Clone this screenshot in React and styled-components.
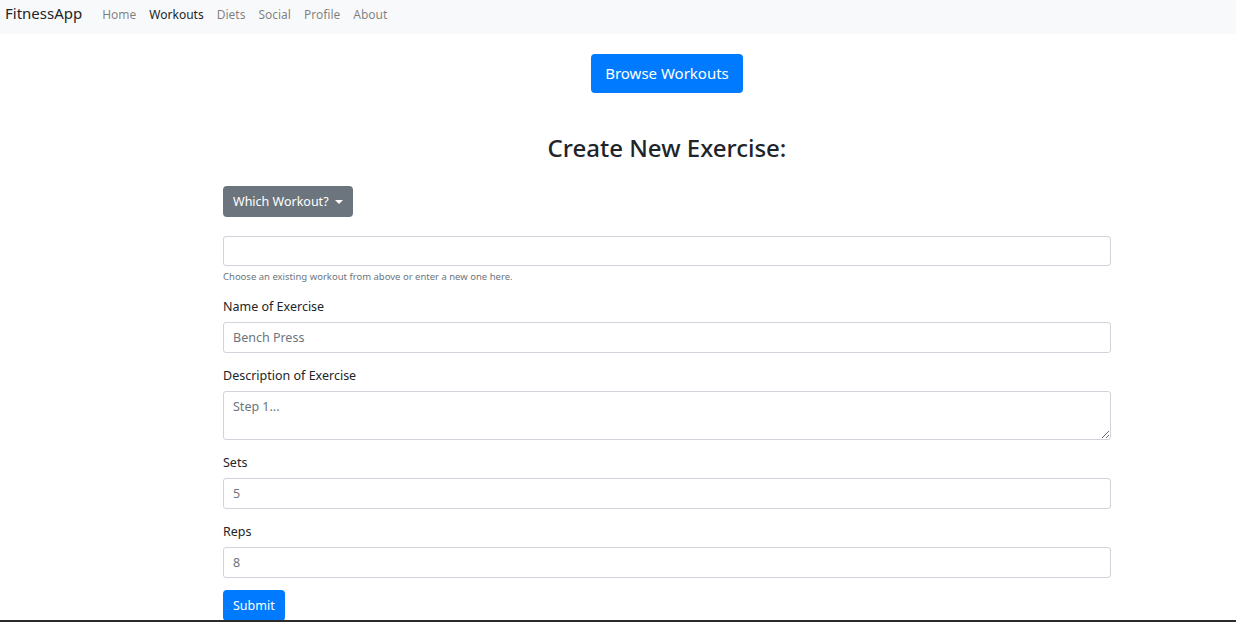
import React from "react";
import styled, { createGlobalStyle } from "styled-components";

const GlobalStyle = createGlobalStyle`
  body {
    margin: 0;
    font-family: "Noto Sans", "Open Sans", sans-serif;
    color: #212529;
    background: #fff;
  }
  * { box-sizing: border-box; }
`;

const NavBar = styled.nav`
  display: flex;
  align-items: baseline;
  height: 34px;
  padding: 2px 5px 0;
  background: #f8f9fa;
`;

const Brand = styled.a`
  font-size: 15px;
  line-height: 22px;
  color: #212529;
  margin-right: 20px;
`;

const NavLinks = styled.div`
  display: flex;
  gap: 13px;
`;

const NavLink = styled.a`
  font-size: 12px;
  color: ${(p) => (p.active ? "#212529" : "rgba(0, 0, 0, 0.5)")};
`;

const Main = styled.main`
  width: 888px;
  margin-left: 223px;
  display: flex;
  flex-direction: column;
`;

const TopRow = styled.div`
  display: flex;
  justify-content: center;
  padding-top: 20px;
`;

const Button = styled.button`
  font-family: inherit;
  border: none;
  color: #fff;
  border-radius: 4px;
  background: ${(p) => (p.variant === "secondary" ? "#6c757d" : "#007bff")};
  font-size: ${(p) => (p.size === "lg" ? "15px" : "12.5px")};
  padding: ${(p) => (p.size === "lg" ? "0 14px 2px" : "0 10px")};
  height: ${(p) => (p.size === "lg" ? "39px" : "31px")};
  display: inline-flex;
  align-items: center;
  align-self: flex-start;
`;

const Caret = styled.span`
  display: inline-block;
  margin-left: 6px;
  border-top: 4px solid #fff;
  border-left: 4px solid transparent;
  border-right: 4px solid transparent;
`;

const Heading = styled.h2`
  text-align: center;
  font-size: 24px;
  font-weight: 500;
  margin: 38px 0 22px;
`;

const Field = styled.div`
  display: flex;
  flex-direction: column;
  margin-top: ${(p) => p.top || 0}px;
`;

const Label = styled.label`
  font-size: 12.5px;
  line-height: 16px;
  margin-bottom: 7px;
`;

const Input = styled.input`
  font-family: inherit;
  font-size: 12.5px;
  height: ${(p) => p.h || 31}px;
  padding: 0 9px;
  border: 1px solid #ced4da;
  border-radius: 3px;
  color: #495057;
  &::placeholder { color: #6c757d; }
`;

const TextArea = styled.textarea`
  font-family: inherit;
  font-size: 12.5px;
  height: 49px;
  padding: 6px 9px;
  border: 1px solid #ced4da;
  border-radius: 3px;
  &::placeholder { color: #6c757d; }
`;

const Help = styled.small`
  font-size: 9.5px;
  line-height: 13px;
  color: #6c757d;
  margin-top: 4px;
`;

const BottomLine = styled.div`
  position: fixed;
  left: 0;
  right: 0;
  bottom: 0;
  height: 2px;
  background: #2b2b2b;
`;

export default function App() {
  return (
    <>
      <GlobalStyle />
      <NavBar>
        <Brand>FitnessApp</Brand>
        <NavLinks>
          <NavLink>Home</NavLink>
          <NavLink active>Workouts</NavLink>
          <NavLink>Diets</NavLink>
          <NavLink>Social</NavLink>
          <NavLink>Profile</NavLink>
          <NavLink>About</NavLink>
        </NavLinks>
      </NavBar>
      <Main>
        <TopRow>
          <Button size="lg">Browse Workouts</Button>
        </TopRow>
        <Heading>Create New Exercise:</Heading>
        <Button variant="secondary" size="sm">
          Which Workout? <Caret />
        </Button>
        <Field top={19}>
          <Input h={30} />
          <Help>Choose an existing workout from above or enter a new one here.</Help>
        </Field>
        <Field top={16}>
          <Label>Name of Exercise</Label>
          <Input placeholder="Bench Press" />
        </Field>
        <Field top={15}>
          <Label>Description of Exercise</Label>
          <TextArea placeholder="Step 1..." />
        </Field>
        <Field top={15}>
          <Label>Sets</Label>
          <Input placeholder="5" />
        </Field>
        <Field top={15}>
          <Label>Reps</Label>
          <Input placeholder="8" />
        </Field>
        <Field top={12}>
          <Button>Submit</Button>
        </Field>
      </Main>
      <BottomLine />
    </>
  );
}
